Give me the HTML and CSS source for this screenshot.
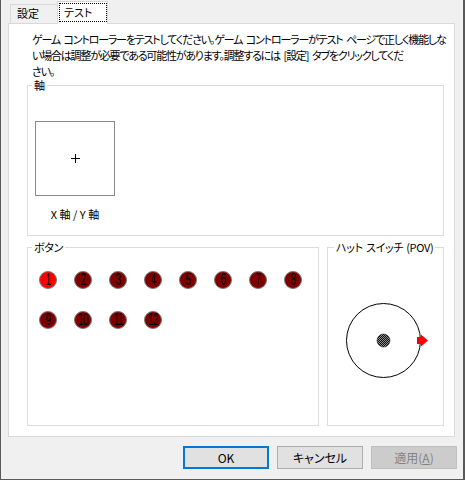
FILE: index.html
```html
<!DOCTYPE html>
<html lang="ja">
<head>
<meta charset="utf-8">
<title>ゲーム コントローラーのテスト</title>
<link rel="stylesheet" href="styles.css">
</head>
<body>
<div class="window">
  <div class="tabs">
    <div class="tab">設定</div>
    <div class="tab active"><span class="focus">テスト</span></div>
  </div>
  <div class="panel">
    <p class="desc">
      <span>ゲーム コントローラーをテストしてください。ゲーム コントローラーがテスト ページで正しく機能しな</span>
      <span>い場合は調整が必要である可能性があります。調整するには [設定] タブをクリックしてくだ</span>
      <span>さい。</span>
    </p>
    <fieldset class="group axis-group">
      <legend>軸</legend>
      <div class="axis">
        <div class="axis-box">
          <svg class="cross" width="9" height="9" viewBox="0 0 9 9"><path d="M4.5 0V9M0 4.5H9" stroke="#000" stroke-width="1" fill="none"/></svg>
        </div>
        <div class="axis-label">X 軸 / Y 軸</div>
      </div>
    </fieldset>
    <div class="row">
      <fieldset class="group buttons-group">
        <legend>ボタン</legend>
        <div class="btn-grid">
          <span class="jb on"><span>1</span></span>
          <span class="jb"><span>2</span></span>
          <span class="jb"><span>3</span></span>
          <span class="jb"><span>4</span></span>
          <span class="jb"><span>5</span></span>
          <span class="jb"><span>6</span></span>
          <span class="jb"><span>7</span></span>
          <span class="jb"><span>8</span></span>
          <span class="jb"><span>9</span></span>
          <span class="jb"><span>10</span></span>
          <span class="jb"><span>11</span></span>
          <span class="jb"><span>12</span></span>
        </div>
      </fieldset>
      <fieldset class="group pov-group">
        <legend>ハット スイッチ (POV)</legend>
        <svg class="pov" width="115" height="172" viewBox="0 0 115 172">
          <defs>
            <pattern id="dither" width="2" height="2" patternUnits="userSpaceOnUse">
              <rect width="2" height="2" fill="#8a8a8a"/>
              <rect width="1" height="1" fill="#111"/>
              <rect x="1" y="1" width="1" height="1" fill="#111"/>
            </pattern>
          </defs>
          <circle cx="55.5" cy="87.5" r="37" fill="none" stroke="#000" stroke-width="1"/>
          <circle cx="55.5" cy="87.5" r="6.5" fill="url(#dither)" stroke="#222" stroke-width="0.6"/>
          <polygon points="89,84 93,84 93,81.5 100,87.5 93,93.5 93,91 89,91" fill="#ff0000"/>
        </svg>
      </fieldset>
    </div>
  </div>
  <div class="footer">
    <button class="btn default">OK</button>
    <button class="btn">キャンセル</button>
    <button class="btn disabled" disabled>適用(<u>A</u>)</button>
  </div>
</div>
</body>
</html>
```
FILE: styles.css
```css
* { box-sizing: border-box; }
html, body { margin: 0; padding: 0; }
body {
  font-family: "Noto Sans CJK JP", "Noto Sans", sans-serif;
  font-size: 11px;
  color: #000;
  background: #f0f0f0;
}
.window {
  width: 465px;
  height: 480px;
  background: #f0f0f0;
  border-left: 1px solid #595959;
  border-right: 2px solid #595959;
  border-bottom: 1px solid #595959;
  display: flex;
  flex-direction: column;
}
.tabs {
  height: 23px;
  flex-shrink: 0;
  display: flex;
  align-items: flex-end;
  padding-left: 9px;
}
.tab {
  width: 47px;
  height: 19px;
  border: 1px solid #d9d9d9;
  border-right: none;
  border-bottom: none;
  padding-left: 6px;
  line-height: 17px;
  background: #f0f0f0;
  font-feature-settings: "palt";
}
.tab.active {
  width: 51px;
  height: 23px;
  margin-bottom: -1px;
  border-right: 1px solid #d9d9d9;
  background: #fff;
  position: relative;
  z-index: 1;
  padding: 1px 0 2px 1px;
}
.focus {
  display: block;
  height: 19px;
  border: 1px dotted #000;
  padding-left: 4px;
  line-height: 17px;
}
.panel {
  flex-shrink: 0;
  margin: 0 8px 0 7px;
  height: 414px;
  border: 1px solid #d9d9d9;
  background: #fff;
  padding: 7px 10px 10px 18px;
  display: flex;
  flex-direction: column;
}
.desc {
  margin: 0 0 0 5px;
  height: 48px;
  line-height: 16px;
  white-space: nowrap;
  letter-spacing: -1.2px;
  word-spacing: 2.5px;
  font-feature-settings: "palt";
}
.desc span { display: block; }
.group {
  margin: 0;
  padding: 0;
  border: 1px solid #dcdcdc;
  min-width: 0;
}
.group legend {
  margin-left: 4px;
  padding: 0 2px;
  line-height: 12px;
  white-space: nowrap;
  letter-spacing: -0.3px;
  word-spacing: 1px;
  font-feature-settings: "palt";
}
.axis-group { height: 157px; flex-shrink: 0; }
.axis { padding: 30px 0 0 7px; width: 87px; }
.axis-box {
  width: 80px;
  height: 75px;
  border: 1px solid #888;
  display: flex;
  align-items: center;
  justify-content: center;
}
.cross { display: block; }
.axis-label {
  margin-top: 10px;
  line-height: 16px;
  text-align: center;
  font-feature-settings: "palt";
}
.row {
  display: flex;
  gap: 8px;
  margin-top: 5px;
  height: 185px;
  flex-shrink: 0;
}
.buttons-group { width: 292px; height: 185px; }
.pov-group { width: 117px; height: 185px; }
.pov-group legend { margin-left: 6px; }
.btn-grid {
  display: grid;
  grid-template-columns: repeat(8, 18px);
  grid-auto-rows: 18px;
  column-gap: 17px;
  row-gap: 22px;
  padding: 18px 0 0 11px;
}
.jb {
  width: 18px;
  height: 18px;
  border-radius: 50%;
  background: #800000;
  border: 1px solid #7a7a7a;
  display: flex;
  align-items: center;
  justify-content: center;
}
.jb.on { background: #ff0000; }
.jb span {
  display: inline-block;
  font-family: "Liberation Sans", sans-serif;
  font-size: 16px;
  line-height: 16px;
  transform: scaleX(0.62);
  color: #000;
  letter-spacing: -1px;
}
.pov { display: block; }
.footer {
  display: flex;
  justify-content: flex-end;
  gap: 8px;
  padding-right: 6px;
  margin-top: 9px;
}
.btn {
  width: 86px;
  height: 23px;
  font-family: inherit;
  font-size: 12px;
  background: #e1e1e1;
  border: 1px solid #adadad;
  padding: 0;
  color: #000;
  border-radius: 0;
  font-feature-settings: "palt";
}
.btn.default { border: 2px solid #0078d7; }
.btn.disabled {
  background: #cccccc;
  border-color: #bfbfbf;
  color: #838383;
}
```
